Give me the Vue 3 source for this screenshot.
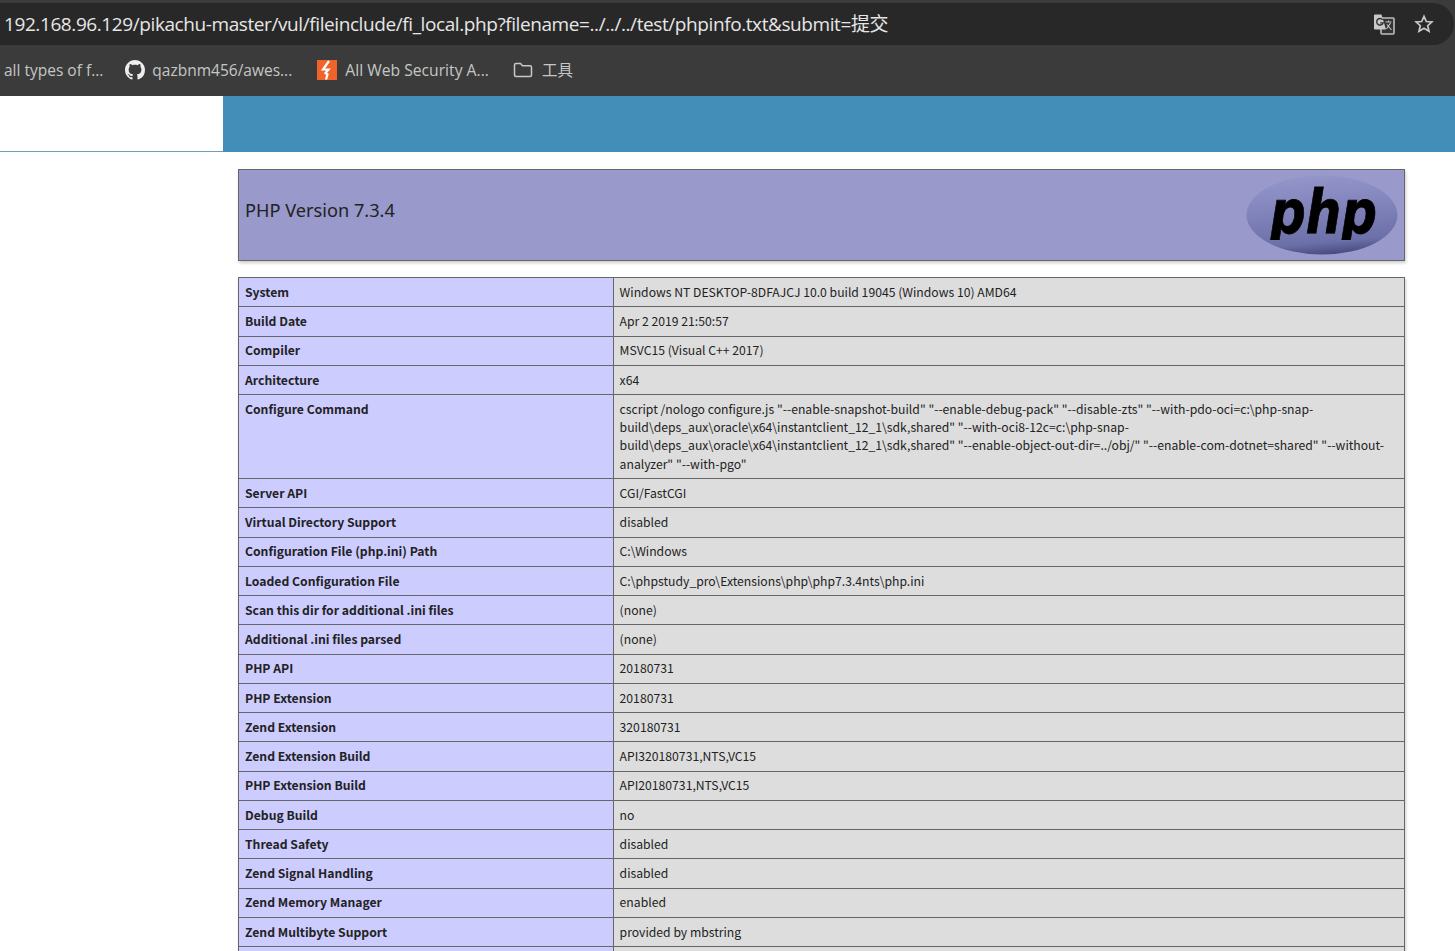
<script setup>
const rows = [
  ['System', 'Windows NT DESKTOP-8DFAJCJ 10.0 build 19045 (Windows 10) AMD64'],
  ['Build Date', 'Apr 2 2019 21:50:57'],
  ['Compiler', 'MSVC15 (Visual C++ 2017)'],
  ['Architecture', 'x64'],
  ['Configure Command', 'cscript /nologo configure.js "--enable-snapshot-build" "--enable-debug-pack" "--disable-zts" "--with-pdo-oci=c:\\php-snap-build\\deps_aux\\oracle\\x64\\instantclient_12_1\\sdk,shared" "--with-oci8-12c=c:\\php-snap-build\\deps_aux\\oracle\\x64\\instantclient_12_1\\sdk,shared" "--enable-object-out-dir=../obj/" "--enable-com-dotnet=shared" "--without-analyzer" "--with-pgo"'],
  ['Server API', 'CGI/FastCGI'],
  ['Virtual Directory Support', 'disabled'],
  ['Configuration File (php.ini) Path', 'C:\\Windows'],
  ['Loaded Configuration File', 'C:\\phpstudy_pro\\Extensions\\php\\php7.3.4nts\\php.ini'],
  ['Scan this dir for additional .ini files', '(none)'],
  ['Additional .ini files parsed', '(none)'],
  ['PHP API', '20180731'],
  ['PHP Extension', '20180731'],
  ['Zend Extension', '320180731'],
  ['Zend Extension Build', 'API320180731,NTS,VC15'],
  ['PHP Extension Build', 'API20180731,NTS,VC15'],
  ['Debug Build', 'no'],
  ['Thread Safety', 'disabled'],
  ['Zend Signal Handling', 'disabled'],
  ['Zend Memory Manager', 'enabled'],
  ['Zend Multibyte Support', 'provided by mbstring'],
]
</script>

<template>
  <div class="page">
    <header class="chrome">
      <div class="topline">
        <div class="urlbar">
          <span class="url">192.168.96.129/pikachu-master/vul/fileinclude/fi_local.php?filename=../../../test/phpinfo.txt&amp;submit=提交</span>
          <svg class="translate" width="22" height="22" viewBox="0 0 22 22">
            <rect x="8" y="5" width="13" height="16" rx="1" fill="#333" stroke="#bdbdbd" stroke-width="1.6"/>
            <path d="M1 2.500a1 1 0 0 1 1-1h6.500L13 16.500H2a1 1 0 0 1-1-1z" fill="#c8c8c8"/>
            <path d="M9.600 6.700a3.300 3.300 0 1 0 .5 3.200H7.200" fill="none" stroke="#333" stroke-width="1.400"/>
            <path d="M12.500 9h6M15.500 7.500V9M13.500 16l4-6M14 11.500l4.500 5.500" fill="none" stroke="#c4c4c4" stroke-width="1.100"/>
          </svg>
          <svg class="star" width="20" height="20" viewBox="0 0 20 20">
            <path d="M10 2.300l2.300 5.200 5.600.5-4.200 3.700 1.300 5.500L10 14.300l-5 2.900 1.300-5.500L2.100 8l5.600-.5z" fill="none" stroke="#c8c8c8" stroke-width="1.700" stroke-linejoin="miter"/>
          </svg>
        </div>
      </div>
      <nav class="bookmarks">
        <span class="mark first">all types of f...</span>
        <span class="mark github">
          <svg width="20" height="20" viewBox="0 0 16 16"><path fill="#eeeeee" d="M8 0C3.580 0 0 3.580 0 8c0 3.540 2.290 6.530 5.470 7.590.4.070.55-.17.55-.38 0-.19-.01-.82-.01-1.490-2.010.37-2.530-.49-2.690-.94-.09-.23-.48-.94-.82-1.130-.28-.15-.68-.52-.01-.53.63-.01 1.080.58 1.230.82.72 1.210 1.870.87 2.330.66.07-.52.28-.87.51-1.070-1.780-.2-3.640-.89-3.640-3.950 0-.87.31-1.590.82-2.150-.08-.2-.36-1.020.08-2.120 0 0 .67-.21 2.200.82.640-.18 1.320-.27 2-.27s1.360.09 2 .27c1.530-1.040 2.200-.82 2.200-.82.44 1.100.16 1.920.08 2.120.51.56.82 1.270.82 2.150 0 3.070-1.870 3.750-3.650 3.950.29.250.54.730.54 1.480 0 1.070-.01 1.930-.01 2.200 0 .21.150.46.550.38A8.010 8.010 0 0 0 16 8c0-4.420-3.580-8-8-8z"/></svg>
          <span>qazbnm456/awes...</span>
        </span>
        <span class="mark security">
          <svg width="20" height="20" viewBox="0 0 20 20"><rect width="20" height="20" fill="#f0642c"/><path d="M12 1L6 9.500h5.500L8.500 13l2 1.500-1.500 5" fill="none" stroke="#fff" stroke-width="2.200"/></svg>
          <span class="security-text">All Web Security A...</span>
        </span>
        <span class="mark folder">
          <svg width="20" height="20" viewBox="0 0 20 20"><path d="M1.500 5a1.500 1.500 0 0 1 1.500-1.500h4.500l2 2.200H17a1.500 1.500 0 0 1 1.500 1.500V15a1.500 1.500 0 0 1-1.500 1.500H3A1.500 1.500 0 0 1 1.500 15z" fill="none" stroke="#c8c8c8" stroke-width="1.500"/></svg>
          <span class="tools">工具</span>
        </span>
      </nav>
    </header>

    <div class="sitebar">
      <div class="sitebar-left"></div>
      <div class="sitebar-right"></div>
    </div>

    <main class="content">
      <div class="banner">
        <h1>PHP Version 7.3.4</h1>
        <svg class="logo" width="152" height="80" viewBox="0 0 152 80">
          <defs>
            <linearGradient id="oval" x1="0.350" y1="0" x2="0.500" y2="1">
              <stop offset="0%" stop-color="#9496ca"/>
              <stop offset="45%" stop-color="#8083ba"/>
              <stop offset="85%" stop-color="#6c70a8"/>
              <stop offset="100%" stop-color="#484c82"/>
            </linearGradient>
            <clipPath id="letters"><rect x="0" y="8" width="152" height="57"/></clipPath>
          </defs>
          <ellipse cx="76" cy="40" rx="75.500" ry="39.500" fill="url(#oval)"/>
          <g clip-path="url(#letters)">
            <text x="24" y="58" class="logo-text" textLength="107" lengthAdjust="spacingAndGlyphs">php</text>
          </g>
        </svg>
      </div>

      <table class="info">
        <tbody>
          <tr v-for="row in rows" :key="row[0]">
            <td class="label">{{ row[0] }}</td>
            <td class="value">{{ row[1] }}</td>
          </tr>
          <tr class="cut">
            <td class="label"></td>
            <td class="value"></td>
          </tr>
        </tbody>
      </table>
    </main>
  </div>
</template>

<style scoped>
.page {
  height: 951px;
  overflow: hidden;
  background: #fff;
  font-family: "Noto Sans CJK SC", "Noto Sans", sans-serif;
}
.chrome {
  background: #3b3b3b;
  height: 96px;
}
.topline {
  height: 45px;
  padding-top: 3px;
  box-sizing: border-box;
}
.urlbar {
  height: 42px;
  background: #282828;
  border-radius: 0 21px 21px 0;
  display: flex;
  align-items: center;
  padding: 0 20px 0 4px;
  margin-right: 1px;
}
.url {
  flex: 1;
  color: #e6e6e6;
  font: 19px/38px "Open Sans", "Noto Sans CJK SC", sans-serif;
  letter-spacing: -0.41px;
  white-space: nowrap;
}
.translate { margin-right: 19px; }
.bookmarks {
  height: 51px;
  display: flex;
  align-items: center;
  padding: 0 0 2px 4px;
  box-sizing: border-box;
  color: #c4c7c5;
  font: 15.500px "Open Sans", "Noto Sans CJK SC", sans-serif;
}
.mark {
  display: flex;
  align-items: center;
  gap: 7px;
  white-space: nowrap;
}
.github { margin-left: 22px; }
.security { margin-left: 25px; gap: 8px; }
.security-text { font-size: 15.700px; }
.folder { margin-left: 24px; gap: 9px; }
.sitebar {
  height: 56px;
  display: flex;
}
.sitebar-left {
  width: 223px;
  border-bottom: 1px solid #6b9ec0;
  box-sizing: border-box;
}
.sitebar-right {
  flex: 1;
  background: #438eb9;
}
.content {
  padding: 17px 50px 0 238px;
  color: #222;
}
.banner {
  height: 92px;
  box-sizing: border-box;
  background: #9999cc;
  border: 1px solid #666;
  box-shadow: 1px 2px 3px #ccc;
  display: flex;
  align-items: center;
  justify-content: space-between;
  padding: 0 6px;
}
h1 {
  margin: 0 0 10px;
  font-size: 18.200px;
  font-weight: 400;
  font-family: "Noto Sans", sans-serif;
  color: #222;
}
.logo-text {
  font-family: "DejaVu Sans", sans-serif;
  font-weight: 700;
  font-style: italic;
  font-size: 61px;
  fill: #000;
  stroke: #000;
  stroke-width: 0.8px;
}
.info {
  width: 100%;
  margin-top: 16px;
  border-collapse: collapse;
  table-layout: fixed;
  box-shadow: 1px 2px 3px #ccc;
  font-size: 12.200px;
  line-height: 18.270px;
}
.info td {
  border: 1px solid #666;
  padding: 4.900px 6px 5.100px;
  vertical-align: top;
}
.cut td { height: 18px; }
.label {
  width: 375px;
  box-sizing: border-box;
  background: #ccccff;
  font-weight: 700;
}
.info td.value {
  padding-left: 5.600px;
  background: #dddddd;
  word-break: break-word;
}
</style>

<style>
html, body { overflow: hidden; }
</style>
